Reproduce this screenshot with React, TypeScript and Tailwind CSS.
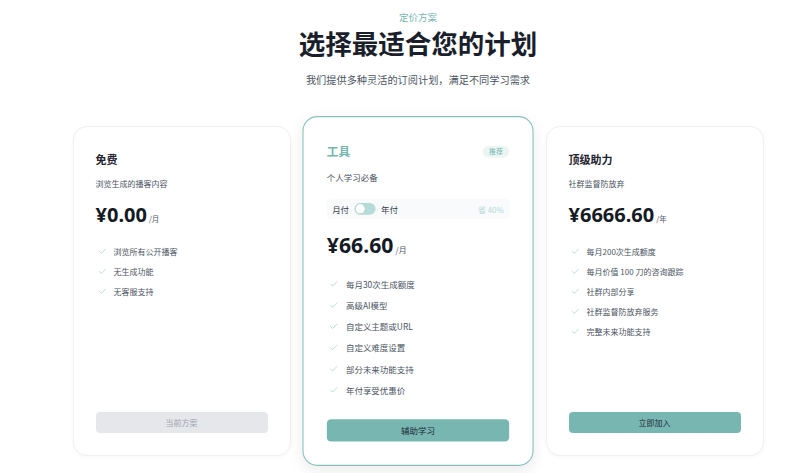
import React from 'react';
import { Check } from 'lucide-react';

interface Plan {
  name: string;
  desc: string;
  price: string;
  unit: string;
  features: string[];
  button: string;
  featured?: boolean;
  current?: boolean;
}

const plans: Plan[] = [
  {
    name: '免费',
    desc: '浏览生成的播客内容',
    price: '¥0.00',
    unit: '/月',
    features: ['浏览所有公开播客', '无生成功能', '无客服支持'],
    button: '当前方案',
    current: true,
  },
  {
    name: '工具',
    desc: '个人学习必备',
    price: '¥66.60',
    unit: '/月',
    features: ['每月30次生成额度', '高级AI模型', '自定义主题或URL', '自定义难度设置', '部分未来功能支持', '年付享受优惠价'],
    button: '辅助学习',
    featured: true,
  },
  {
    name: '顶级助力',
    desc: '社群监督防放弃',
    price: '¥6666.60',
    unit: '/年',
    features: ['每月200次生成额度', '每月价值 100 刀的咨询跟踪', '社群内部分享', '社群监督防放弃服务', '完整未来功能支持'],
    button: '立即加入',
  },
];

function PlanCard({ plan }: { plan: Plan }) {
  const wrap = plan.featured
    ? 'scale-[1.06] border-[1.5px] border-[#86c0bc] shadow-[0_4px_14px_rgba(0,0,0,0.08)]'
    : 'border border-[#eef0f2] shadow-[0_1px_4px_rgba(0,0,0,0.03)]';
  return (
    <div className={`flex h-[330px] w-[218px] flex-col rounded-[14px] bg-white px-[22px] pt-[24px] pb-[22px] ${wrap}`}>
      <div className="flex h-[16px] items-center justify-between">
        <h3 className={`text-[11px] font-bold leading-[16px] ${plan.featured ? 'text-[#74b5b0]' : 'text-[#1f2430]'}`}>{plan.name}</h3>
        {plan.featured && (
          <span className="rounded-full bg-[#eaf5f4] px-[6px] py-[1px] text-[6.5px] leading-[9px] text-[#74b5b0]">推荐</span>
        )}
      </div>
      <p className="mt-[11px] text-[8px] leading-[11px] text-[#4b5563]">{plan.desc}</p>
      {plan.featured && (
        <div className="mt-[15px] flex h-[19px] items-center rounded-[4px] bg-[#f8fafb] px-[5px]">
          <span className="text-[8px] text-[#374151]">月付</span>
          <span className="ml-[5px] flex h-[11px] w-[20px] items-center rounded-full bg-[#b6dcd9] px-[1px]">
            <span className="h-[9px] w-[9px] rounded-full bg-white shadow-[0_0_1px_rgba(0,0,0,0.3)]" />
          </span>
          <span className="ml-[5px] text-[8px] text-[#374151]">年付</span>
          <span className="ml-auto text-[7.5px] text-[#b4d9d6]">省 40%</span>
        </div>
      )}
      <div className={`${plan.featured ? 'mt-[13px]' : 'mt-[14px]'} flex items-end`}>
        <span className="text-[20px] font-bold leading-[24px] text-[#151a24]" style={{ fontFamily: '"Noto Sans", "Noto Sans CJK SC", sans-serif' }}>{plan.price}</span>
        <span className="mb-[3px] ml-[2px] text-[7.5px] leading-[10px] text-[#4b5563]">{plan.unit}</span>
      </div>
      <ul className="mt-[19px] flex flex-col gap-[8.5px]">
        {plan.features.map((f) => (
          <li key={f} className="flex items-center">
            <Check size={9} strokeWidth={1.6} className="ml-[2px] text-[#8fc7c2]" />
            <span className="ml-[7px] text-[8px] leading-[11.5px] text-[#4b5563]">{f}</span>
          </li>
        ))}
      </ul>
      <button
        className={`mt-auto h-[21px] w-full rounded-[4px] text-[8px] ${plan.current ? 'bg-[#e5e7eb] text-[#9ca3af]' : 'bg-[#78b6b2] text-[#1f2937]'}`}
      >
        {plan.button}
      </button>
    </div>
  );
}

export default function App() {
  return (
    <div
      className="min-h-[473px] w-full bg-white pl-[36px]"
      style={{ fontFamily: '"Noto Sans CJK SC", "Noto Sans", sans-serif' }}
    >
      <div className="flex flex-col items-center pt-[11px]">
        <p className="text-[9.5px] leading-[12px] text-[#74b5b0]">定价方案</p>
        <h1 className="mt-[4px] text-[26.5px] font-bold leading-[32px] text-[#1a1f2b]">选择最适合您的计划</h1>
        <p className="mt-[14px] text-[10.2px] leading-[14px] text-[#4b5563]">我们提供多种灵活的订阅计划，满足不同学习需求</p>
      </div>
      <div className="mt-[39px] flex justify-center gap-[18.5px]">
        {plans.map((p) => (
          <PlanCard key={p.name} plan={p} />
        ))}
      </div>
    </div>
  );
}
